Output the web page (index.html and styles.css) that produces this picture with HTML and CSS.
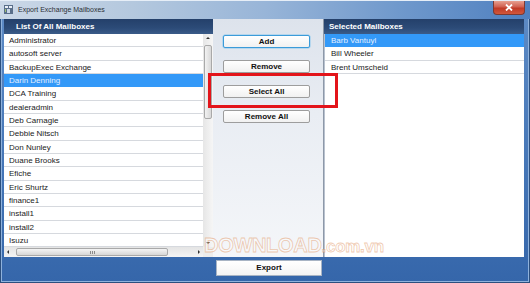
FILE: index.html
```html
<!DOCTYPE html>
<html>
<head>
<meta charset="utf-8">
<link rel="stylesheet" href="styles.css">
</head>
<body>
<div class="window">
  <div class="titlebar">
    <svg class="appicon" width="9" height="9" viewBox="0 0 9 9">
      <rect x="0" y="0" width="9" height="9" fill="#5a6f8a"/>
      <rect x="1" y="1" width="3" height="2" fill="#e8eef6"/>
      <rect x="5" y="1" width="3" height="2" fill="#e8eef6"/>
      <rect x="3" y="4" width="3" height="4" fill="#c8d6e6"/>
      <rect x="1" y="4" width="1" height="3" fill="#9fc070"/>
    </svg>
    <span class="title">Export Exchange Mailboxes</span>
    <div class="close">
      <svg width="8" height="7" viewBox="0 0 8 7"><path d="M1 0.5 L7 6.5 M7 0.5 L1 6.5" stroke="#fff" stroke-width="1.8"/></svg>
    </div>
  </div>
  <div class="content">
    <div class="panel left">
      <div class="header">List Of All Mailboxes</div>
      <div class="lbody">
        <div class="lrow">
          <div class="list">
            <div class="item">Administrator</div>
            <div class="item">autosoft server</div>
            <div class="item">BackupExec Exchange</div>
            <div class="item sel">Darin Denning</div>
            <div class="item">DCA Training</div>
            <div class="item">dealeradmin</div>
            <div class="item">Deb Carnagie</div>
            <div class="item">Debbie Nitsch</div>
            <div class="item">Don Nunley</div>
            <div class="item">Duane Brooks</div>
            <div class="item">Efiche</div>
            <div class="item">Eric Shurtz</div>
            <div class="item">finance1</div>
            <div class="item">install1</div>
            <div class="item">install2</div>
            <div class="item">Isuzu</div>
          </div>
          <div class="vscroll">
            <div class="arrow up"></div>
            <div class="vthumb"></div>
            <div class="vspace"></div>
            <div class="arrow down"></div>
          </div>
        </div>
        <div class="hscroll">
          <div class="harrow hleft"></div>
          <div class="hthumb"><span class="grip"></span></div>
          <div class="hspace"></div>
          <div class="harrow hright"></div>
          <div class="corner"></div>
        </div>
      </div>
    </div>
    <div class="middle">
      <div class="btn focus">Add</div>
      <div class="btn">Remove</div>
      <div class="btn">Select All</div>
      <div class="btn">Remove All</div>
    </div>
    <div class="panel right">
      <div class="header">Selected Mailboxes</div>
      <div class="list rlist">
        <div class="item sel">Barb Vantuyl</div>
        <div class="item">Bill Wheeler</div>
        <div class="item">Brent Umscheid</div>
      </div>
    </div>
  </div>
  <div class="bottom">
    <div class="export">Export</div>
  </div>
  <div class="highlight"></div>
  <div class="watermark">DOWNLOAD<span class="wm-small">.com.vn</span></div>
</div>
</body>
</html>
```
FILE: styles.css
```css
html, body {
  margin: 0;
  padding: 0;
}
body {
  width: 530px;
  height: 283px;
  overflow: hidden;
  font-family: "Liberation Sans", Arial, sans-serif;
  font-size: 8px;
  color: #1a1a1a;
}
.window {
  position: relative;
  width: 530px;
  height: 283px;
  display: flex;
  flex-direction: column;
  background: linear-gradient(180deg, #5f8cc6 0%, #4475b6 60%, #3566aa 100%);
  box-shadow: inset 0 0 0 1px #2c4f7e, inset 0 0 0 2px #8fb2dc;
}
.titlebar {
  height: 19px;
  flex: none;
  display: flex;
  align-items: center;
  padding-left: 4px;
  background: linear-gradient(90deg, #cbd8e7 0%, #b4c8de 25%, #98b5d8 50%, #7099cc 75%, #4f80c0 100%);
  box-shadow: inset 0 1px 0 #e6eef7;
}
.appicon {
  flex: none;
  margin-right: 5px;
}
.title {
  font-size: 7px;
  color: #2b2f36;
}
.close {
  margin-left: auto;
  margin-right: 5px;
  align-self: flex-start;
  margin-top: 1px;
  width: 32px;
  height: 14px;
  box-sizing: border-box;
  border: 1px solid #7d3a32;
  border-top: none;
  border-radius: 0 0 4px 4px;
  background: linear-gradient(180deg, #e7a090 0%, #d06050 45%, #c03a26 55%, #d2583c 100%);
  display: flex;
  align-items: center;
  justify-content: center;
}
.content {
  height: 238px;
  flex: none;
  display: flex;
  padding-left: 4px;
}
.panel {
  display: flex;
  flex-direction: column;
}
.left {
  width: 209px;
}
.right {
  width: 200px;
}
.header {
  height: 15px;
  flex: none;
  line-height: 15px;
  font-weight: bold;
  color: #ffffff;
  background: linear-gradient(180deg, #24406a 0%, #2c4b78 60%, #3a5b88 100%);
}
.left .header {
  padding-left: 12px;
}
.right .header {
  padding-left: 5px;
}
.lbody {
  flex: 1;
  display: flex;
  flex-direction: column;
}
.lrow {
  height: 213px;
  display: flex;
}
.list {
  flex: 1;
  background: #ffffff;
  overflow: hidden;
}
.item {
  height: 12.33px;
  line-height: 13px;
  border-bottom: 1px solid #d6d9de;
  padding-left: 5px;
  white-space: nowrap;
}
.right .item {
  padding-left: 6px;
}
.item.sel {
  background: #3399f8;
  color: #e4efff;
  border-bottom-color: #3399f8;
}
.vscroll {
  width: 10px;
  display: flex;
  flex-direction: column;
  background: linear-gradient(90deg, #e6e6e6, #f6f6f6);
}
.arrow {
  height: 9px;
  flex: none;
  position: relative;
}
.arrow::after {
  content: "";
  position: absolute;
  left: 3px;
  width: 0;
  height: 0;
  border-left: 2px solid transparent;
  border-right: 2px solid transparent;
}
.arrow.up::after {
  top: 3px;
  border-bottom: 2px solid #333;
}
.arrow.down::after {
  top: 4px;
  border-top: 2px solid #333;
}
.vthumb {
  height: 72px;
  flex: none;
  margin: 2px 1px 0 1px;
  border: 1px solid #a9a9a9;
  border-radius: 2px;
  background: linear-gradient(90deg, #f2f2f2, #d8d8d8);
}
.vspace {
  flex: 1;
}
.hscroll {
  height: 10px;
  flex: none;
  display: flex;
  background: linear-gradient(180deg, #e4e4e4, #f4f4f4);
}
.harrow {
  width: 9px;
  flex: none;
  position: relative;
}
.harrow::after {
  content: "";
  position: absolute;
  top: 3px;
  width: 0;
  height: 0;
  border-top: 2px solid transparent;
  border-bottom: 2px solid transparent;
}
.hleft::after {
  left: 3px;
  border-right: 2px solid #333;
}
.hright::after {
  left: 4px;
  border-left: 2px solid #333;
}
.hthumb {
  width: 152px;
  flex: none;
  margin: 1px 0 1px 3px;
  box-sizing: border-box;
  border: 1px solid #a9a9a9;
  border-radius: 2px;
  background: linear-gradient(180deg, #f4f4f4, #d6d6d6);
  display: flex;
  align-items: center;
  justify-content: center;
}
.grip {
  width: 5px;
  height: 3px;
  background: repeating-linear-gradient(90deg, #8a8a8a 0 1px, transparent 1px 2px);
}
.hspace {
  flex: 1;
}
.corner {
  width: 10px;
  flex: none;
  background: #ececec;
}
.middle {
  width: 111px;
  flex: none;
  display: flex;
  flex-direction: column;
  gap: 12px;
  padding-top: 16px;
  box-sizing: border-box;
  background: linear-gradient(180deg, #dde3ec 0%, #e9edf3 40%, #f4f6f9 100%);
  border-right: 1px solid #8d98a8;
}
.btn {
  margin-left: 10px;
  width: 87px;
  height: 13px;
  flex: none;
  box-sizing: border-box;
  border: 1px solid #9d9d9d;
  border-radius: 2px;
  background: linear-gradient(180deg, #ffffff, #f1f1f1);
  font-weight: bold;
  text-align: center;
  line-height: 11px;
  color: #111;
}
.btn.focus {
  border-color: #3b9bd9;
  box-shadow: 0 0 0 0.5px #8cc8ee;
}
.rlist {
  border-left: 1px solid #b9c2cf;
}
.bottom {
  flex: 1;
  padding: 3px 0 0 216px;
}
.export {
  width: 106px;
  height: 16px;
  box-sizing: border-box;
  border: 1px solid #a8b4c4;
  background: linear-gradient(180deg, #ffffff, #f4f4f4);
  font-weight: bold;
  text-align: center;
  line-height: 14px;
  color: #111;
}
.highlight {
  position: absolute;
  left: 208px;
  top: 73px;
  width: 130px;
  height: 35px;
  box-sizing: border-box;
  border: 3px solid #e3141a;
}
.watermark {
  position: absolute;
  left: 204px;
  top: 234px;
  font-size: 20px;
  font-weight: bold;
  letter-spacing: -0.3px;
  color: rgba(255, 255, 255, 0.4);
  -webkit-text-stroke: 0.8px rgba(225, 150, 100, 0.5);
  white-space: nowrap;
}
.wm-small {
  font-size: 17px;
}
```
